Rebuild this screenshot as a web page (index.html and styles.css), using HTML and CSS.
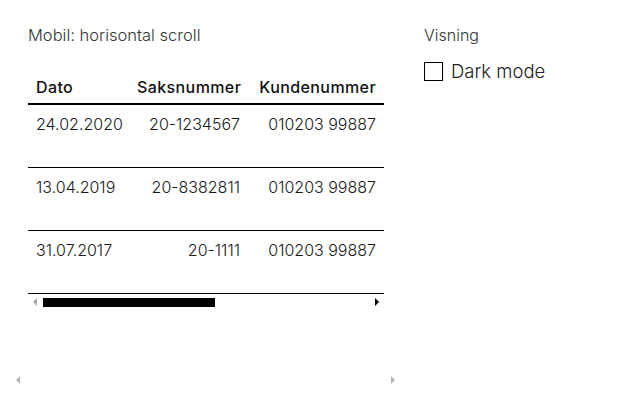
FILE: index.html
```html
<!DOCTYPE html>
<html lang="no">
<head>
<meta charset="utf-8">
<title>Tabell</title>
<link rel="stylesheet" href="styles.css">
</head>
<body>
<div class="page">
  <section class="demo">
    <div class="demo-body">
      <h2 class="demo-title">Mobil: horisontal scroll</h2>
      <div class="scroller">
        <table class="table">
          <colgroup>
            <col class="col-date">
            <col class="col-case">
            <col class="col-cust">
          </colgroup>
          <thead>
            <tr>
              <th>Dato</th>
              <th class="num">Saksnummer</th>
              <th class="num">Kundenummer</th>
            </tr>
          </thead>
          <tbody>
            <tr>
              <td>24.02.2020</td>
              <td class="num">20-1234567</td>
              <td class="num">010203 99887</td>
            </tr>
            <tr>
              <td>13.04.2019</td>
              <td class="num">20-8382811</td>
              <td class="num">010203 99887</td>
            </tr>
            <tr>
              <td>31.07.2017</td>
              <td class="num">20-1111</td>
              <td class="num">010203 99887</td>
            </tr>
          </tbody>
        </table>
        <div class="hscroll hscroll-inner">
          <span class="arrow arrow-left"></span>
          <span class="track"><span class="thumb" style="width:172px"></span></span>
          <span class="arrow arrow-right"></span>
        </div>
      </div>
    </div>
    <div class="hscroll hscroll-outer">
      <span class="arrow arrow-left arrow-off"></span>
      <span class="track"></span>
      <span class="arrow arrow-right arrow-off"></span>
    </div>
  </section>
  <aside class="settings">
    <h2 class="settings-title">Visning</h2>
    <label class="check">
      <input type="checkbox" class="check-input">
      <span class="check-box"></span>
      <span class="check-label">Dark mode</span>
    </label>
  </aside>
</div>
</body>
</html>
```

FILE: styles.css
```css
* { box-sizing: border-box; }

html, body {
  margin: 0;
  background: #fff;
}

body {
  font-family: Inter, "Liberation Sans", sans-serif;
  font-weight: 300;
  color: #1a1a1a;
}

.page {
  display: flex;
  gap: 24px;
  padding: 12px;
  align-items: flex-start;
}

.demo {
  width: 388px;
  height: 374px;
  padding-top: 11px;
  display: flex;
  flex-direction: column;
}

.demo-body {
  flex: 1;
  padding: 0 16px;
}

.demo-title {
  margin: 0 0 24px;
  font-size: 16.5px;
  line-height: 24px;
  font-weight: 300;
  color: #333;
}

.table {
  width: 356px;
  table-layout: fixed;
  border-collapse: collapse;
  font-size: 16px;
  line-height: 24px;
  white-space: nowrap;
}

.col-date { width: 101px; }
.col-case { width: 119px; }
.col-cust { width: 136px; }

.table th {
  text-align: left;
  font-weight: 500;
  letter-spacing: 0.4px;
  padding: 4px 8px;
  border-bottom: 2px solid #000;
  color: #111;
}

.table td {
  vertical-align: top;
  padding: 7px 8px;
  height: 63px;
  border-bottom: 1px solid #000;
}

.table .num { text-align: right; }

/* scrollbar drawing */
.hscroll {
  display: flex;
  align-items: center;
  height: 13px;
  padding: 0 5px;
}

.hscroll-inner {
  margin-top: 2px;
}

.track {
  flex: 1;
  display: flex;
  align-items: center;
  height: 100%;
  margin: 0 6px;
}

.thumb {
  height: 9px;
  background: #000;
}

.arrow {
  width: 0;
  height: 0;
  border-top: 4px solid transparent;
  border-bottom: 4px solid transparent;
  flex: none;
}

.arrow-left { border-right: 4px solid #a8a8a8; }
.arrow-right { border-left: 4px solid #000; }
.arrow-off.arrow-right { border-left-color: #b4b4b4; }
.arrow-off.arrow-left { border-right-color: #b4b4b4; }

.hscroll-outer {
  height: 12px;
  padding: 0 5px 0 4px;
}

.settings {
  padding-top: 11px;
}

.settings-title {
  margin: 0 0 10px;
  font-size: 16px;
  line-height: 24px;
  font-weight: 300;
  color: #333;
}

.check {
  display: flex;
  align-items: center;
  gap: 8px;
  cursor: pointer;
}

.check-input {
  position: absolute;
  opacity: 0;
  width: 1px;
  height: 1px;
}

.check-box {
  width: 19px;
  height: 19px;
  border: 1.5px solid #000;
  background: #fff;
  flex: none;
}

.check-label {
  font-size: 18.5px;
  line-height: 28px;
  font-weight: 300;
  color: #222;
}
```
